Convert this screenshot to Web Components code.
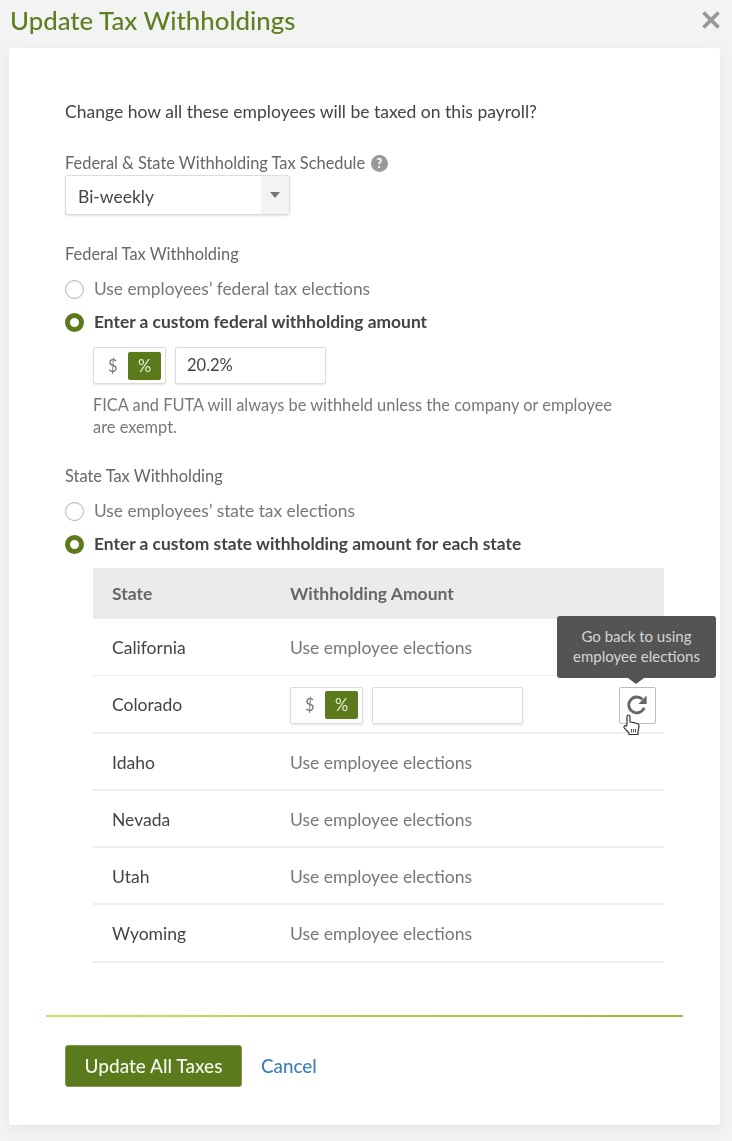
<!DOCTYPE html>
<html lang="en"><head><meta charset="utf-8"><title>Update Tax Withholdings</title>
<style>
html,body{margin:0;padding:0;background:#f3f3f3}
body{font-family:Lato,"Liberation Sans",sans-serif;color:#444;width:732px;height:1141px;overflow:hidden}
</style></head><body>
<tax-dialog></tax-dialog>
<template id="t-dialog">
<style>
:host{display:block;height:1141px;box-sizing:border-box;font:17.55px/24px Lato,"Liberation Sans",sans-serif;color:#444;filter:blur(.35px)}
header{display:flex;justify-content:space-between;align-items:center;height:48px;padding:0 5px 8px 10px;box-sizing:border-box}
h1{margin:0;font:500 25.8px/30px Lato,sans-serif;color:#5f8022}
.close{width:32px;display:flex;justify-content:center;margin-top:-1px}
.card{margin-left:9px;width:711px;height:1077px;box-sizing:border-box;background:#fff;border-radius:3px;box-shadow:0 4px 14px rgba(0,0,0,.06);padding:52px 56px 0}
.intro{margin:0;color:#444}
.sched{margin-top:27px;font-size:16.4px;color:#666;display:flex;align-items:center;gap:6px;line-height:24px}
section{margin-top:27px}
.lbl{font-size:16.4px;color:#666;line-height:24px}
.stack{margin-top:11px;display:flex;flex-direction:column;gap:9px}
.amt{margin:13px 0 0 28px}
.hint{margin:10px 0 0 28px;font-size:16.4px;line-height:22px;color:#777;width:530px}
.state{margin-top:26px}
tax-table{margin:12px 0 0 28px}
.rule{margin:52px 0 0 -19px;width:637px;height:2px;background:linear-gradient(90deg,#c8e25c,#9dbd36)}
.foot{display:flex;align-items:center;gap:19px;margin-top:28px}
.btn{height:42px;width:177px;box-sizing:border-box;background:#5a7a1c;border:1px solid #7f9a4c;border-radius:3px;color:#f4f6ee;font:500 19px/40px Lato,sans-serif;text-align:center}
a{color:#3d7fbd;font:500 18.8px/24px Lato,sans-serif;text-decoration:none}
</style>
<header><h1>Update Tax Withholdings</h1>
<span class="close"><svg width="18" height="18" viewBox="0 0 18 18"><path d="M1.5 1.5L16.5 16.5M16.5 1.5L1.5 16.5" stroke="#979797" stroke-width="3.8" fill="none"/></svg></span></header>
<div class="card">
<p class="intro">Change how all these employees will be taxed on this payroll?</p>
<div class="sched"><span>Federal &amp; State Withholding Tax Schedule</span><svg width="17" height="17" viewBox="0 0 17 17"><circle cx="8.5" cy="8.5" r="8.5" fill="#999"/><text x="8.5" y="13" text-anchor="middle" font-family="Lato" font-weight="900" font-size="12.5" fill="#fff">?</text></svg></div>
<tax-select>Bi-weekly</tax-select>
<section><div class="lbl">Federal Tax Withholding</div>
<div class="stack"><tax-radio>Use employees’ federal tax elections</tax-radio><tax-radio checked>Enter a custom federal withholding amount</tax-radio></div>
<tax-amount class="amt" value="20.2%"></tax-amount>
<p class="hint">FICA and FUTA will always be withheld unless the company or employee are exempt.</p>
</section>
<section class="state"><div class="lbl">State Tax Withholding</div>
<div class="stack"><tax-radio>Use employees’ state tax elections</tax-radio><tax-radio checked>Enter a custom state withholding amount for each state</tax-radio></div>
<tax-table></tax-table>
</section>
<div class="rule"></div>
<div class="foot"><div class="btn">Update All Taxes</div><a href="#">Cancel</a></div>
</div>
</template>
<template id="t-select">
<style>
:host{display:flex;width:225px;height:40px;box-sizing:border-box;border:1px solid #dcdcdc;border-radius:3px;box-shadow:0 1px 2px rgba(0,0,0,.12);background:#fff;font-size:17.5px;color:#444;line-height:40px}
.v{flex:1;padding:1px 0 0 12px}
.a{width:28px;background:#f3f3f3;display:flex;align-items:center;justify-content:center}
.a i{border:5px solid transparent;border-top:6px solid #777;border-bottom:0}
</style><div class="v"><slot></slot></div><div class="a"><i></i></div>
</template>
<template id="t-radio">
<style>
:host{display:flex;align-items:center;gap:10px;height:24px;color:#777;font-size:17.35px}
:host([checked]){color:#444;font-weight:700;font-size:17.4px}
i{width:19px;height:19px;box-sizing:border-box;border-radius:50%;border:1px solid #b5b5b5;background:#fff;flex:none;box-shadow:inset 0 1px 1px rgba(0,0,0,.06)}
:host([checked]) i{border:5.5px solid #5a7a1c;box-shadow:none}
</style><i></i><span><slot></slot></span>
</template>
<template id="t-amount">
<style>
:host{display:flex;gap:9px;height:37px;font-size:16.5px}
.box{box-sizing:border-box;height:37px;border:1px solid #dcdcdc;border-radius:2px;box-shadow:0 1px 2px rgba(0,0,0,.1);background:#fff}
.tog{width:73px;display:flex;align-items:center;padding:0 4px 0 14px;justify-content:space-between;color:#777}
.tog b{width:33px;height:28px;background:#5a7a1c;border-radius:2px;color:#e6edd6;font-weight:400;text-align:center;line-height:28px}
.inp{width:151px;padding-left:11px;line-height:35px;color:#444;font-size:16.5px}
</style><div class="box tog"><span>$</span><b>%</b></div><div class="box inp"></div>
</template>
<template id="t-table">
<style>
:host{display:block;width:571px;position:relative;font-size:17.55px;color:#444}
.row{display:flex;align-items:center;height:57px;border-bottom:2px solid #eee;box-sizing:border-box;padding:2px 0 0 19px}
.row>span:first-child{width:178px;flex:none}
.head{height:51px;background:#ebebeb;border:0;font-weight:700;color:#666;padding-top:0}
.muted{color:#777}
.thin{border-bottom-width:1px;padding-top:1px}
.co,.last{height:58px}
.tip{position:absolute;left:464px;top:48px;width:159px;height:62px;box-sizing:border-box;background:#545454;border-radius:3px;color:#d4d4d4;font-size:15px;line-height:20px;text-align:center;padding-top:10px}
.tip:after{content:"";position:absolute;left:71px;top:62px;border:8px solid transparent;border-top:6px solid #545454;border-bottom:0}
.re{position:absolute;left:526px;top:119px;width:37px;height:37px;box-sizing:border-box;border:1px solid #bbb;border-radius:2px;background:#fff;display:flex;align-items:center;justify-content:center}
.re svg{margin:0 1px 1px 0}
.hand{position:absolute;left:529px;top:146px}
</style>
<div class="row head"><span>State</span><span>Withholding Amount</span></div>
<div class="row thin"><span>California</span><span class="muted">Use employee elections</span></div>
<div class="row co"><span>Colorado</span><tax-amount></tax-amount></div>
<div class="row"><span>Idaho</span><span class="muted">Use employee elections</span></div>
<div class="row"><span>Nevada</span><span class="muted">Use employee elections</span></div>
<div class="row"><span>Utah</span><span class="muted">Use employee elections</span></div>
<div class="row last"><span>Wyoming</span><span class="muted">Use employee elections</span></div>
<div class="tip">Go back to using<br>employee elections</div>
<div class="re"><svg width="24" height="24" viewBox="0 0 22 22"><path d="M17.6 13.6A7.3 7.3 0 1 1 16 5.8" fill="none" stroke="#666" stroke-width="2.6"/><path d="M19.8 2.2V10h-7.6z" fill="#666"/></svg></div>
<svg class="hand" width="20" height="22" viewBox="0 0 20 22"><path d="M5 11V2.5a1.5 1.5 0 0 1 3 0V8l5 .8 3 1.2c1 .5 1.2 1.2 1 2.4L16 18v2.5H7V19L2.2 13.8c-1-1.2.8-2.8 2-1.6z" fill="#fff" stroke="#333" stroke-width="1.2" stroke-linejoin="round"/><path d="M9.5 15v3.5M11.5 15v3.5M13.5 15v3.5" stroke="#555"/></svg>
</template>
<script>
function make(name,id,setup){customElements.define(name,class extends HTMLElement{
constructor(){super();this.attachShadow({mode:"open"}).appendChild(document.getElementById(id).content.cloneNode(true));}
connectedCallback(){if(setup)setup(this)}
})}
make("tax-select","t-select");
make("tax-radio","t-radio");
make("tax-amount","t-amount",el=>{el.shadowRoot.querySelector(".inp").textContent=el.getAttribute("value")||""});
make("tax-table","t-table");
make("tax-dialog","t-dialog");
</script>
</body></html>
